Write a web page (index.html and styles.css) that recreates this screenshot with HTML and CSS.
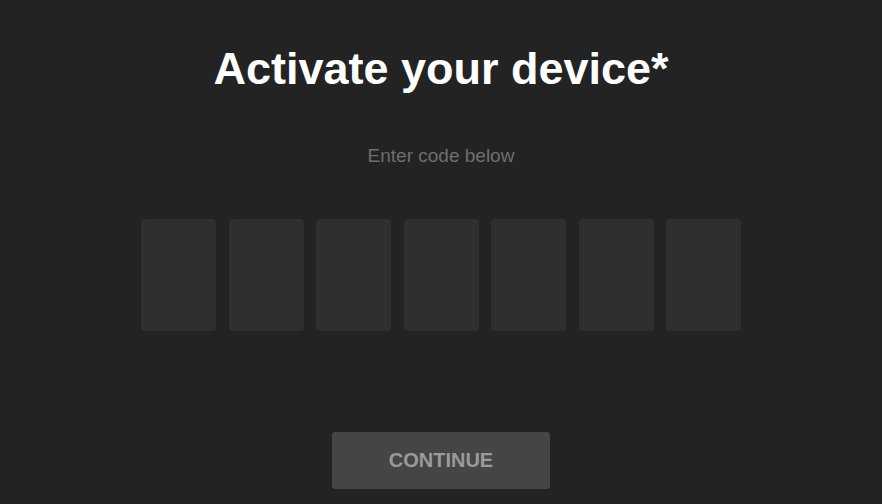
FILE: index.html
```html
<!DOCTYPE html>
<html lang="en">
<head>
  <meta charset="UTF-8" />
  <meta name="viewport" content="width=device-width, initial-scale=1.0"/>
  <title>Activate your device</title>
  <link rel="stylesheet" href="styles.css">
</head>
<body>

  <main class="activate">
    <h1>Activate your device*</h1>
    <p class="hint">Enter code below</p>

    <div class="code-boxes">
      <input class="code-box" maxlength="1" />
      <input class="code-box" maxlength="1" />
      <input class="code-box" maxlength="1" />
      <input class="code-box" maxlength="1" />
      <input class="code-box" maxlength="1" />
      <input class="code-box" maxlength="1" />
      <input class="code-box" maxlength="1" />
    </div>

    <button class="continue-btn">Continue</button>
  </main>

</body>
</html>
```

FILE: styles.css
```css
body {
  margin: 0;
  font-family: 'Liberation Sans', Arial, sans-serif;
  background-color: #232323;
  color: #fff;
}

.activate {
  display: flex;
  flex-direction: column;
  align-items: center;
  padding-top: 40px;
}

h1 {
  margin: 0;
  font-size: 45px;
  font-weight: bold;
  line-height: 58px;
  color: #fff;
}

.hint {
  margin: 47px 0 0;
  font-size: 19px;
  line-height: 22px;
  color: #6e6e6e;
}

.code-boxes {
  display: flex;
  gap: 12.5px;
  margin-top: 52px;
}

.code-box {
  width: 75px;
  height: 112px;
  box-sizing: border-box;
  border: none;
  border-radius: 4px;
  background-color: #2f2f2f;
  outline: none;
}

.continue-btn {
  margin-top: 101px;
  width: 218px;
  height: 57px;
  border: none;
  border-radius: 3px;
  background-color: #454545;
  color: #9a9a9a;
  font-family: 'Liberation Sans', Arial, sans-serif;
  font-size: 20px;
  font-weight: bold;
  text-transform: uppercase;
  cursor: pointer;
}
```
